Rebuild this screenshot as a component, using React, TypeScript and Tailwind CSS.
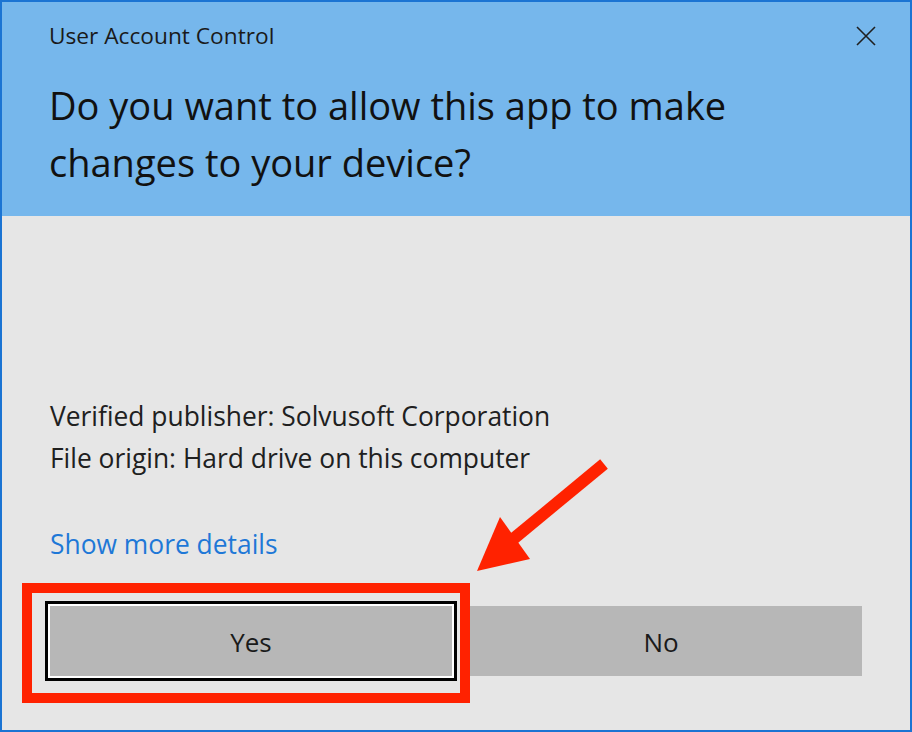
export default function App() {
  return (
    <div className="relative w-[912px] h-[732px] border-2 border-[#1b74d3] bg-[#e6e6e6] flex flex-col font-['Open_Sans',sans-serif] text-[#1a1a1a] overflow-hidden">
      {/* Header */}
      <header className="h-[214px] shrink-0 bg-[#76b7ec] pl-[47px] pr-[34px] pt-[22px]">
        <div className="flex items-start justify-between">
          <span className="text-[22.7px] leading-[24px]">User Account Control</span>
          <svg className="mt-[2px]" width="20" height="20" viewBox="0 0 20 20" fill="none">
            <path d="M1 1 L19 19 M19 1 L1 19" stroke="#1f1f1f" strokeWidth="1.6" />
          </svg>
        </div>
        <h1 className="mt-[29px] text-[38px] leading-[57px] text-[#111]">
          Do you want to allow this app to make
          <br />
          changes to your device?
        </h1>
      </header>

      {/* Body */}
      <main className="flex-1 flex flex-col pl-[48px] pr-[48px] pt-[179px]">
        <p className="text-[26.4px] leading-[42px] text-[#202020]">Verified publisher: Solvusoft Corporation</p>
        <p className="text-[26.4px] leading-[42px] text-[#202020]">File origin: Hard drive on this computer</p>
        <a href="#" className="mt-[44px] self-start text-[26.4px] leading-[42px] text-[#1e78d7]">
          Show more details
        </a>
        <div className="mt-[41px] flex gap-[8px]">
          <button className="flex-1 h-[70px] pt-[3px] bg-[#b7b7b7] text-[26px] text-[#1a1a1a] shadow-[0_0_0_2px_#ffffff,0_0_0_5px_#000000]">
            Yes
          </button>
          <button className="flex-1 h-[70px] pt-[3px] bg-[#b7b7b7] text-[26px] text-[#1a1a1a]">No</button>
        </div>
      </main>

      {/* Annotation: red frame + arrow */}
      <div className="absolute left-[20px] top-[581px] w-[448px] h-[120px] border-[10px] border-[#ff2200] pointer-events-none" />
      <svg
        className="absolute left-[-2px] top-[-2px] pointer-events-none"
        width="912"
        height="732"
        viewBox="0 0 912 732"
      >
        <line x1="604" y1="464" x2="512" y2="540" stroke="#ff2200" strokeWidth="12" />
        <polygon points="477,571 500,517 530,559" fill="#ff2200" />
      </svg>
    </div>
  );
}
